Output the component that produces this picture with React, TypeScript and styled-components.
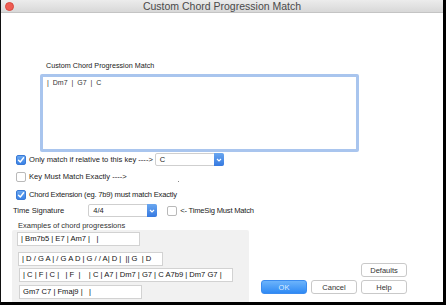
import React from 'react'
import styled, { createGlobalStyle } from 'styled-components'

const GlobalStyle = createGlobalStyle`
  * { box-sizing: border-box; }
  html, body { margin: 0; padding: 0; background: #fff; }
  body {
    font-family: 'Liberation Sans', Arial, sans-serif;
    color: #222;
  }
`

const Window = styled.div`
  width: 446px;
  height: 305px;
  display: flex;
  flex-direction: column;
  background: #fff;
  border-left: 1px solid #111;
  border-right: 3px solid #000;
  border-bottom: 3px solid #000;
  overflow: hidden;
`

const TitleBar = styled.div`
  height: 13px;
  flex: none;
  display: flex;
  align-items: center;
  justify-content: center;
  position: relative;
  background: linear-gradient(#ececec, #d8d8d8);
  border-bottom: 1px solid #c4c4c4;
  font-size: 10.5px;
  color: #4a4a4a;
`

const CloseDot = styled.span`
  position: absolute;
  left: 4px;
  top: 2px;
  width: 9px;
  height: 9px;
  border-radius: 50%;
  background: #ee5c52;
  border: 1px solid #d9473e;
`

const Body = styled.div`
  flex: 1;
  display: flex;
  flex-direction: column;
  font-size: 7.6px;
`

const FieldLabel = styled.div`
  margin: 48px 0 0 45px;
  height: 13px;
  line-height: 10px;
  font-size: 7.2px;
`

const ProgressionBox = styled.div`
  margin-left: 39px;
  width: 319px;
  height: 78px;
  border: 3px solid #a9c5ee;
  border-radius: 2px;
  padding: 2px 4px;
  font-size: 7px;
  color: #333;
  word-spacing: 2px;
`

const Row = styled.div<{ $top: number }>`
  display: flex;
  align-items: center;
  margin-top: ${({ $top }) => $top}px;
  height: 13px;
`

const Check = styled.span<{ $on?: boolean; $left?: number }>`
  width: 10px;
  height: 10px;
  flex: none;
  border-radius: 2px;
  display: inline-flex;
  align-items: center;
  justify-content: center;
  margin: 0 3px 0 ${({ $left }) => $left ?? 15}px;
  background: ${({ $on }) => ($on ? 'linear-gradient(#6aa7f0, #3b82e6)' : '#fff')};
  border: 1px solid ${({ $on }) => ($on ? '#3a7ad6' : '#b9b9b9')};
`

const CheckText = styled.span<{ $tight?: boolean }>`
  white-space: nowrap;
  letter-spacing: ${({ $tight }) => ($tight ? '-0.2px' : '0')};
`

const Select = styled.div<{ $left: number; $width: number }>`
  margin-left: ${({ $left }) => $left}px;
  width: ${({ $width }) => $width}px;
  height: 13px;
  display: flex;
  align-items: center;
  border: 1px solid #cfcfcf;
  border-radius: 2px;
  background: #fff;
  font-size: 7.5px;
`

const SelectValue = styled.span`
  flex: 1;
  padding-left: 4px;
`

const Arrow = styled.span`
  width: 10px;
  height: 13px;
  margin-right: -1px;
  border-radius: 0 2px 2px 0;
  background: linear-gradient(#6aa7f0, #3679e0);
  display: flex;
  align-items: center;
  justify-content: center;
`

const Plain = styled.span<{ $left: number }>`
  margin-left: ${({ $left }) => $left}px;
  white-space: nowrap;
`

const Speck = styled.span`
  width: 1px;
  height: 1px;
  background: #888;
  margin-left: 51px;
  margin-top: 10px;
`

const Bottom = styled.div`
  flex: 1;
  display: flex;
  margin-top: 3px;
`

const ExamplesCol = styled.div`
  margin-left: 11px;
  width: 237px;
  display: flex;
  flex-direction: column;
`

const ExamplesLabel = styled.div`
  margin-left: 6px;
  height: 10px;
  line-height: 11px;
  font-size: 7.5px;
  color: #333;
`

const Panel = styled.div`
  flex: 1;
  background: #f1f1f1;
  border-radius: 2px 2px 0 0;
  padding: 2px 0 0 5px;
  display: flex;
  flex-direction: column;
  align-items: flex-start;
`

const Example = styled.div<{ $width: number; $gap: number; $shift: number }>`
  width: ${({ $width }) => $width}px;
  height: 14px;
  flex: none;
  margin-top: ${({ $gap }) => $gap}px;
  margin-left: ${({ $shift }) => $shift}px;
  background: #fff;
  border: 1px solid #d2d2d2;
  padding-left: 3px;
  font-size: 7.6px;
  line-height: 12px;
  color: #111;
  white-space: pre;
  overflow: hidden;
`

const Buttons = styled.div`
  margin-left: auto;
  margin-right: 36px;
  padding-bottom: 8px;
  display: flex;
  flex-direction: column;
  justify-content: flex-end;
  align-items: flex-end;
  gap: 3px;
`

const ButtonRow = styled.div`
  display: flex;
  gap: 4px;
`

const Button = styled.div<{ $primary?: boolean }>`
  width: 46px;
  height: 14px;
  border-radius: 3px;
  display: flex;
  align-items: center;
  justify-content: center;
  font-size: 7.5px;
  color: ${({ $primary }) => ($primary ? '#dfeeff' : '#333')};
  background: ${({ $primary }) => ($primary ? 'linear-gradient(#6cb4fb, #2f8af4)' : '#fff')};
  border: 1px solid ${({ $primary }) => ($primary ? '#3b8cef' : '#c9c9c9')};
`

const Tick = () => (
  <svg width="8" height="8" viewBox="0 0 8 8">
    <path d="M1.5 4.2 L3.3 6 L6.6 1.8" fill="none" stroke="#fff" strokeWidth="1.4" strokeLinecap="round" strokeLinejoin="round" />
  </svg>
)

const Chevron = () => (
  <svg width="6" height="4" viewBox="0 0 6 4">
    <path d="M1 1 L3 3 L5 1" fill="none" stroke="#fff" strokeWidth="1.2" />
  </svg>
)

const examples = [
  { text: '| Bm7b5 | E7 | Am7 |   |', width: 123, gap: 0, shift: 0 },
  { text: '| D / G A | / G A D | G / / A| D |  || G  | D', width: 145, gap: 6, shift: 1 },
  { text: '| C | F | C |   | F  |    | C | A7 | Dm7 | G7 | C A7b9 | Dm7 G7 |', width: 214, gap: 2, shift: 2 },
  { text: 'Gm7 C7 | Fmaj9 |   |', width: 123, gap: 3, shift: 2 },
]

const App: React.FC = () => (
  <Window>
    <GlobalStyle />
    <TitleBar>
      <CloseDot />
      Custom Chord Progression Match
    </TitleBar>
    <Body>
      <FieldLabel>Custom Chord Progression Match</FieldLabel>
      <ProgressionBox>| Dm7 | G7 | C</ProgressionBox>

      <Row $top={1}>
        <Check $on><Tick /></Check>
        <CheckText>Only match if relative to this key ----&gt;</CheckText>
        <Select $left={2} $width={69}>
          <SelectValue>C</SelectValue>
          <Arrow><Chevron /></Arrow>
        </Select>
      </Row>
      <Row $top={4}>
        <Check />
        <CheckText>Key Must Match Exactly ----&gt;</CheckText>
        <Speck />
      </Row>
      <Row $top={5}>
        <Check $on><Tick /></Check>
        <CheckText $tight>Chord Extension (eg. 7b9) must match Exactly</CheckText>
      </Row>
      <Row $top={3}>
        <Plain $left={12}>Time Signature</Plain>
        <Select $left={24} $width={69}>
          <SelectValue>4/4</SelectValue>
          <Arrow><Chevron /></Arrow>
        </Select>
        <Check $left={10} />
        <CheckText $tight>&lt;- TimeSig Must Match</CheckText>
      </Row>

      <Bottom>
        <ExamplesCol>
          <ExamplesLabel>Examples of chord progressions</ExamplesLabel>
          <Panel>
            {examples.map((e) => (
              <Example key={e.text} $width={e.width} $gap={e.gap} $shift={e.shift}>
                {e.text}
              </Example>
            ))}
          </Panel>
        </ExamplesCol>
        <Buttons>
          <Button>Defaults</Button>
          <ButtonRow>
            <Button $primary>OK</Button>
            <Button>Cancel</Button>
            <Button>Help</Button>
          </ButtonRow>
        </Buttons>
      </Bottom>
    </Body>
  </Window>
)

export default App
